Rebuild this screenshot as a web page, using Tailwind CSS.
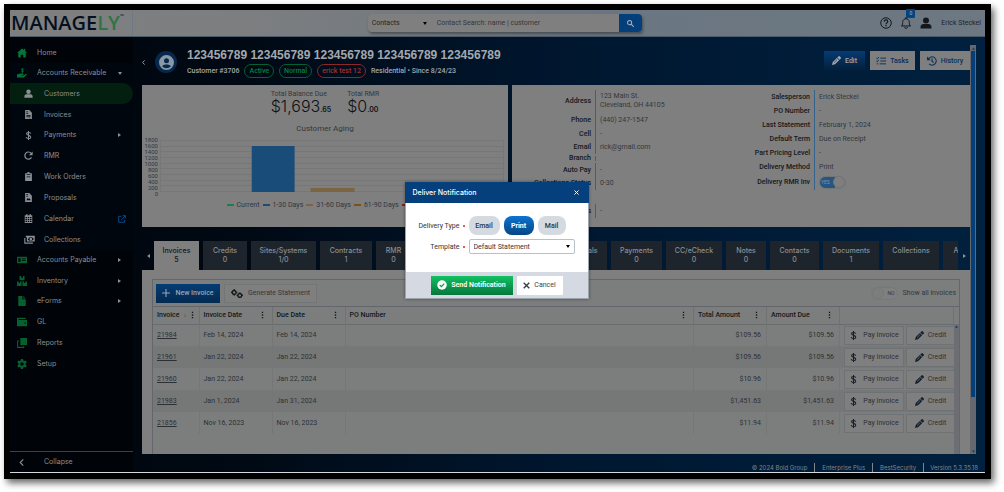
<!DOCTYPE html>
<html lang="en">
<head>
<meta charset="utf-8">
<title>Managely - Customer</title>
<script src="https://cdn.jsdelivr.net/npm/@tailwindcss/browser@4"></script>
</head>
<body class="bg-white font-['Roboto','Liberation_Sans',sans-serif] text-[7px] leading-[10px] text-[#22262c]">
<svg class="hidden" xmlns="http://www.w3.org/2000/svg">
  <symbol id="home" viewBox="0 0 24 24"><path fill="currentColor" d="M12 1 0 12h3v11h6v-7h6v7h6V12h3l-4-4V2h-3v3z"/></symbol>
  <symbol id="hand" viewBox="0 0 24 24"><path fill="none" stroke="currentColor" stroke-width="2" d="M15.500 2.800c-1-1.200-5-1.200-5 .8 0 2.200 5 1.400 5 3.900 0 2.200-4.200 2.100-5.300.5M13 0v12"/><path fill="currentColor" d="M0 15h4l3-2h7q2 0 2 2t-2 2h-4v1h6l5-4q3 0 2 2l-6 6q-1 1-3 1H0z"/></symbol>
  <symbol id="user" viewBox="0 0 24 24"><path fill="currentColor" d="M12 1a5.500 5.500 0 0 0 0 12 5.500 5.500 0 0 0 0-12M1 23v-3c0-4 3-6 6-6h10c3 0 6 2 6 6v3z"/></symbol>
  <symbol id="invoice" viewBox="0 0 24 24"><path fill="currentColor" fill-rule="evenodd" d="M3 0h11l7 7v17H3zM6 4v2h5V4zm0 4v2h5V8zm1 5v6h10v-6zm2 2h6v2H9zm4 6v1h5v-1z"/></symbol>
  <symbol id="dollar" viewBox="0 0 24 24"><path fill="none" stroke="currentColor" stroke-width="2.800" d="M18 7c-1-4-11-4.500-11 0 0 5 11 4 11 9.500 0 5-11 5-12.500 0M12 0v24"/></symbol>
  <symbol id="rotate" viewBox="0 0 24 24"><path fill="none" stroke="currentColor" stroke-width="3.200" d="M20 17A9.500 9.500 0 1 1 19 6"/><path fill="currentColor" d="M23 1v10H13z"/></symbol>
  <symbol id="clip" viewBox="0 0 24 24"><path fill="currentColor" fill-rule="evenodd" d="M3 3h5q1-3 4-3t4 3h5v21H3zm4 3v2h10V6zm0 6v2h10v-2z"/></symbol>
  <symbol id="proposal" viewBox="0 0 24 24"><path fill="currentColor" fill-rule="evenodd" d="M3 0h11l7 7v17H3zM6 3v2h5V3zm0 4v2h5V7zm0 12 4-6 3 3 2-2 3 5z"/></symbol>
  <symbol id="cal" viewBox="0 0 24 24"><path fill="currentColor" fill-rule="evenodd" d="M2 3h4V0h3v3h6V0h3v3h4v21H2zm2 5v3h4V8zm6 0v3h4V8zm6 0v3h4V8zM4 13v3h4v-3zm6 0v3h4v-3zm6 0v3h4v-3zM4 18v3h4v-3zm6 0v3h4v-3zm6 0v3h4v-3z"/></symbol>
  <symbol id="cash" viewBox="0 0 28 24"><path fill="currentColor" fill-rule="evenodd" d="M4 2h24v15H7V6H4zm10 4q-1 3-4 4v3q3 0 4 2h7q1-2 4-3V9q-3 0-4-3zm3.500 1.500a3.500 3.500 0 1 1 0 7 3.500 3.500 0 0 1 0-7M0 8h3v12h20v3H0z"/></symbol>
  <symbol id="check" viewBox="0 0 28 24"><path fill="currentColor" fill-rule="evenodd" d="M0 3h28v18H0zm4 4v10h6V7zm10 1v2h10V8zm0 5v2h10v-2z"/></symbol>
  <symbol id="boxes" viewBox="0 0 24 24"><path fill="currentColor" fill-rule="evenodd" d="M6 0h4v4h4V0h4v10H6zM0 13h4v4h3v-4h4v11H0zm13 0h4v4h3v-4h4v11H13z"/></symbol>
  <symbol id="file" viewBox="0 0 24 24"><path fill="currentColor" d="M3 0h10v8h8v16H3zM15 0l6 6h-6z"/></symbol>
  <symbol id="wallet" viewBox="0 0 24 24"><path fill="currentColor" fill-rule="evenodd" d="M0 2h21v3H4v2h20v15H0zm18 11v3h3v-3z"/></symbol>
  <symbol id="copy" viewBox="0 0 24 24"><path fill="currentColor" d="M8 0h16v17H8z"/><path fill="none" stroke="currentColor" stroke-width="2.500" d="M5 7H1.500v15.500H16V20"/></symbol>
  <symbol id="gear" viewBox="0 0 24 24"><path fill="currentColor" fill-rule="evenodd" d="M9.500 0h5l.7 3.600 2.300 1.300 3.500-1.200 2.500 4.300-2.800 2.500v3l2.800 2.500-2.500 4.300-3.500-1.200-2.300 1.300-.7 3.600h-5l-.7-3.600-2.300-1.300L3 20.300.5 16l2.800-2.500v-3L.5 8 3 3.700l3.500 1.200 2.300-1.300zM12 8a4 4 0 1 0 0 8 4 4 0 0 0 0-8"/></symbol>
  <symbol id="pencil" viewBox="0 0 24 24"><path fill="currentColor" fill-rule="evenodd" d="M17 1q2-2 4 0l2 2q2 2 0 4l-3 3-6-6zM13 5l6 6L8 22l-8 2 2-8zm0 4-8 8 1 1 8-8z"/></symbol>
  <symbol id="tasks" viewBox="0 0 28 24"><path fill="none" stroke="currentColor" stroke-width="2.600" d="m1 4 2.500 2.500L8 1M1 12l2.500 2.500L8 9M12 4h16M12 12h16M10 20h18M2 20h4"/></symbol>
  <symbol id="history" viewBox="0 0 24 24"><path fill="none" stroke="currentColor" stroke-width="2.600" d="M3.500 7A10 10 0 1 1 5 19M12 6v6.500l4 3"/><path fill="currentColor" d="M0 1v9h9z"/></symbol>
  <symbol id="dots" viewBox="0 0 4 12"><path fill="currentColor" d="M1 1h2v2H1zM1 5h2v2H1zM1 9h2v2H1z"/></symbol>
  <symbol id="right" viewBox="0 0 6 8"><path fill="currentColor" d="M0 0v8l6-4z"/></symbol>
  <symbol id="down" viewBox="0 0 8 6"><path fill="currentColor" d="M0 0h8L4 6z"/></symbol>
  <symbol id="cross" viewBox="0 0 10 10"><path fill="none" stroke="currentColor" stroke-width="2" d="m1 1 8 8M9 1 1 9"/></symbol>
</svg>

<div class="flex h-screen pt-1 pr-[13px] pb-[13px] pl-1">
<div class="relative flex min-w-0 flex-1 flex-col border-6 border-black bg-[linear-gradient(90deg,#00040a_0%,#000a15_25%,#001730_58%,#00213f_100%)] shadow-[3px_4px_7px_rgba(0,0,0,0.6)]">

  <header class="flex h-[27px] shrink-0 items-center border-b border-[#4d5a68] bg-[linear-gradient(90deg,#7f7f7f_0%,#7c7e80_25%,#6a7681_60%,#6d7882_100%)]">
    <div class="flex h-full w-[123px] shrink-0 items-start border-r border-[#6f7986] pl-px font-['Open_Sans',sans-serif] text-[20px] leading-[26px] font-semibold text-[#04101f]">MANAGE<span class="text-[#2f7444]">LY</span><sup class="top-0 text-[5px] leading-3 font-normal">™</sup></div>
    <div class="flex flex-1 justify-center">
      <form class="-ml-1 flex h-[18px] w-[274px] rounded-sm bg-[#7f7f7f] shadow-[1px_2px_3px_rgba(0,0,0,0.35)]">
        <div class="relative flex w-16 items-center">
          <select aria-label="Search in" class="h-full w-full appearance-none pl-1 outline-none"><option>Contacts</option></select>
          <svg class="pointer-events-none absolute right-[5px] h-[3px] w-1 text-black"><use href="#down"/></svg>
        </div>
        <input aria-label="Contact Search" placeholder="Contact Search: name | customer" class="min-w-0 flex-1 pl-[5px] outline-none placeholder:text-[#33373d]">
        <button type="button" aria-label="Search" class="flex w-[23px] items-center justify-center rounded-r-sm bg-[#053f7a] text-[#9fb0c2]"><svg class="size-[7px]" viewBox="0 0 12 12"><path fill="none" stroke="currentColor" stroke-width="1.800" d="M4.500 1a3.500 3.500 0 1 1 0 7 3.500 3.500 0 0 1 0-7M7 7l4.500 4.500"/></svg></button>
      </form>
    </div>
    <div class="flex h-full items-center pr-1 text-[#14171b]">
      <button aria-label="Help" class="mr-2"><svg class="size-3" viewBox="0 0 24 24"><circle cx="12" cy="12" r="10.500" fill="none" stroke="currentColor" stroke-width="2"/><path fill="none" stroke="currentColor" stroke-width="2.400" d="M8.500 9.500c0-5 7-4.500 7-.5 0 3-3.500 2.500-3.500 5.500m0 1.500v2.500"/></svg></button>
      <button aria-label="Notifications" class="relative mr-2"><svg class="size-3" viewBox="0 0 24 24"><path fill="none" stroke="currentColor" stroke-width="2" d="M3 18c3-3 2-6 2.500-9C6 5.500 9 3.500 12 3.500s6 2 6.500 5.500c.5 3-.5 6 2.500 9zM12 0v3.500M9 20.500c1 3 5 3 6 0"/></svg><span class="absolute -top-2 left-[6px] h-[9px] w-[9px] rounded-[1px] bg-[#05457f] text-center text-[5px] leading-[9px] text-[#9fb4c8]">0</span></button>
      <svg class="mr-[9px] size-3"><use href="#user"/></svg>
      <span class="text-[#20242a]">Erick Steckel</span>
    </div>
  </header>

  <div class="flex min-h-0 flex-1">
    <nav class="flex w-[123px] shrink-0 flex-col bg-[#000307] pt-[5px] font-['Inter',sans-serif] text-[#8b8f94]">
      <a href="#" class="flex h-[21px] items-center gap-[10px] pl-[7px]"><svg class="size-[10px] text-[#06733a]"><use href="#home"/></svg>Home</a>
      <a href="#" class="flex h-5 items-center gap-[10px] bg-[#00060d] pr-[11px] pl-[7px]"><svg class="size-[10px] text-[#06733a]"><use href="#hand"/></svg><span class="flex-1">Accounts Receivable</span><svg class="h-[3px] w-1"><use href="#down"/></svg></a>
      <div class="bg-[#00060d]">
        <a href="#" class="flex h-[21px] items-center gap-[11px] rounded-r-full bg-[#021f10] pl-[14px]"><svg class="size-[9px]"><use href="#user"/></svg>Customers</a>
        <a href="#" class="flex h-[21px] items-center gap-[11px] pl-[14px]"><svg class="size-[9px]"><use href="#invoice"/></svg>Invoices</a>
        <a href="#" class="flex h-5 items-center gap-[11px] pr-3 pl-[14px]"><svg class="size-[9px]"><use href="#dollar"/></svg><span class="flex-1">Payments</span><svg class="h-1 w-[3px]"><use href="#right"/></svg></a>
        <a href="#" class="flex h-[21px] items-center gap-[11px] pl-[14px]"><svg class="size-[9px]"><use href="#rotate"/></svg>RMR</a>
        <a href="#" class="flex h-[21px] items-center gap-[11px] pl-[14px]"><svg class="size-[9px]"><use href="#clip"/></svg>Work Orders</a>
        <a href="#" class="flex h-[21px] items-center gap-[11px] pl-[14px]"><svg class="size-[9px]"><use href="#proposal"/></svg>Proposals</a>
        <a href="#" class="flex h-[21px] items-center gap-[11px] pr-[7px] pl-[14px]"><svg class="size-[9px]"><use href="#cal"/></svg><span class="flex-1">Calendar</span><svg class="size-2 text-[#06508f]" viewBox="0 0 12 12"><path fill="none" stroke="currentColor" stroke-width="1.400" d="M5 2H1v9h9V7M7 1h4v4M11 1 5 7"/></svg></a>
        <a href="#" class="flex h-[21px] items-center gap-[9px] pl-[14px]"><svg class="h-[9px] w-[11px]"><use href="#cash"/></svg>Collections</a>
      </div>
      <a href="#" class="flex h-5 items-center gap-[10px] pr-3 pl-[7px]"><svg class="size-[10px] text-[#06602f]"><use href="#check"/></svg><span class="flex-1">Accounts Payable</span><svg class="h-1 w-[3px]"><use href="#right"/></svg></a>
      <a href="#" class="flex h-[21px] items-center gap-[10px] pr-3 pl-[7px]"><svg class="size-[10px] text-[#06602f]"><use href="#boxes"/></svg><span class="flex-1">Inventory</span><svg class="h-1 w-[3px]"><use href="#right"/></svg></a>
      <a href="#" class="flex h-5 items-center gap-[10px] pr-3 pl-[7px]"><svg class="size-[10px] text-[#06602f]"><use href="#file"/></svg><span class="flex-1">eForms</span><svg class="h-1 w-[3px]"><use href="#right"/></svg></a>
      <a href="#" class="flex h-[21px] items-center gap-[10px] pl-[7px]"><svg class="size-[10px] text-[#06602f]"><use href="#wallet"/></svg>GL</a>
      <a href="#" class="flex h-[21px] items-center gap-[10px] pl-[7px]"><svg class="size-[10px] text-[#06602f]"><use href="#copy"/></svg>Reports</a>
      <a href="#" class="flex h-[21px] items-center gap-[10px] pl-[7px]"><svg class="size-[10px] text-[#06602f]"><use href="#gear"/></svg>Setup</a>
      <button class="mt-auto flex h-[21px] items-center gap-5 border-t border-[#3c3f43] pl-[9px]"><svg class="h-[7px] w-[5px]" viewBox="0 0 5 8"><path fill="none" stroke="currentColor" stroke-width="1.300" d="M4.500.5 1 4l3.500 3.500"/></svg>Collapse</button>
    </nav>

    <main class="flex min-w-0 flex-1 flex-col pr-[9px]">
      <div class="flex min-h-0 flex-1 pt-2">
        <div class="flex min-w-0 flex-1 flex-col pl-[9px]">
          <div class="flex h-10 shrink-0 gap-[10px] text-[#a3a8ae]">
            <div class="flex h-[34px] items-center gap-[10px]">
              <svg class="h-[5px] w-[3px]" viewBox="0 0 5 8"><path fill="none" stroke="currentColor" stroke-width="1.600" d="M4.500.5 1 4l3.500 3.500"/></svg>
              <span class="flex size-[22px] items-center justify-center rounded-full bg-[#05284c]"><svg class="size-[15px]" viewBox="0 0 24 24"><path fill="#8a98a6" fill-rule="evenodd" d="M12 0a12 12 0 1 0 0 24 12 12 0 0 0 0-24m0 5a4 4 0 1 1 0 8 4 4 0 0 1 0-8M5 18c1.500-4 12.500-4 14 0a9 9 0 0 1-14 0"/></svg></span>
            </div>
            <div class="min-w-0 flex-1">
              <h1 class="mt-[3px] font-['Liberation_Sans',sans-serif] text-[12px] leading-[14px] font-bold whitespace-nowrap">123456789 123456789 123456789 123456789 123456789</h1>
              <div class="mt-[2px] flex items-center gap-[5px] font-medium whitespace-nowrap">
                <span>Customer #3706</span>
                <span class="flex h-[14px] items-center rounded-full border border-[#06602f] px-1 text-[#06803e]">Active</span>
                <span class="flex h-[14px] items-center rounded-full border border-[#06602f] px-1 text-[#06803e]">Normal</span>
                <span class="flex h-[14px] items-center rounded-full border border-[#8a2727] px-1 text-[#a03030]">erick test 12</span>
                <span>Residential • Since 8/24/23</span>
              </div>
            </div>
            <div class="mt-[6px] flex h-[19px] gap-[5px] font-medium">
              <button class="flex w-[41px] items-center justify-center gap-1 bg-linear-to-b from-[#053c74] to-[#04203c]"><svg class="size-[9px]"><use href="#pencil"/></svg>Edit</button>
              <button class="flex w-[45px] items-center justify-center gap-1 bg-[#7f7f7f] text-[#05305c]"><svg class="size-[10px]"><use href="#tasks"/></svg>Tasks</button>
              <button class="flex w-[50px] items-center justify-center gap-1 bg-[#7f7f7f] text-[#05305c]"><svg class="size-[10px]"><use href="#history"/></svg>History</button>
            </div>
          </div>

          <div class="flex h-[142px] shrink-0 gap-1">
            <section class="w-[366px] shrink-0 bg-[#7f7f7f] pt-[5px]">
              <div class="flex justify-center gap-4">
                <div class="leading-[8px] text-[#33373d]">Total Balance Due<div class="font-['Inter',sans-serif] text-[16px] leading-4 font-light text-[#0e1115]">$1,693<span class="text-[7px] font-semibold">.65</span></div></div>
                <div class="leading-[8px] text-[#33373d]">Total RMR<div class="font-['Inter',sans-serif] text-[16px] leading-4 font-light text-[#0e1115]">$0<span class="text-[7px] font-semibold">.00</span></div></div>
              </div>
              <h2 class="mt-[6px] text-center text-[8px] text-[#33373d]">Customer Aging</h2>
              <div class="mt-[3px] flex h-[62px] pr-[3px]">
                <div class="flex h-[57px] w-4 flex-col items-end justify-between text-[6px] leading-[6px] text-[#33373d]"><span>1800</span><span>1600</span><span>1400</span><span>1200</span><span>1000</span><span>800</span><span>600</span><span>400</span><span>200</span><span>0</span></div>
                <svg class="h-[62px] min-w-0 flex-1" viewBox="0 0 348 62" preserveAspectRatio="none">
                  <path stroke="#777" fill="none" d="M2 3.500h345M2 9.500h345M2 14.500h345M2 20.500h345M2 26.500h345M2 31.500h345M2 37.500h345M2 43.500h345M2 48.500h345M2 54.500h345M2.500 3v52M346.500 3v52"/>
                  <path fill="#1a4c7a" d="M94 9h43v46H94z"/><path fill="#7b6442" d="M153 51h44v4h-44z"/>
                </svg>
              </div>
              <div class="mt-px flex justify-center gap-[3px] whitespace-nowrap text-[#33373d]">
                <span class="flex items-center gap-[3px]"><i class="h-[2px] w-[7px] bg-[#1b7f4c]"></i>Current</span>
                <span class="flex items-center gap-[3px]"><i class="h-[2px] w-[7px] bg-[#1a4c7a]"></i>1-30 Days</span>
                <span class="flex items-center gap-[3px]"><i class="h-[2px] w-[7px] bg-[#7b6442]"></i>31-60 Days</span>
                <span class="flex items-center gap-[3px]"><i class="h-[2px] w-[7px] bg-[#805010]"></i>61-90 Days</span>
                <span class="flex items-center gap-[3px]"><i class="h-[2px] w-[7px] bg-[#802020]"></i>91+</span>
              </div>
            </section>

            <section class="flex min-w-0 flex-1 bg-[#7f7f7f] pt-[5px] text-[#33373d]">
              <dl class="grid w-[200px] auto-rows-min grid-cols-[83px_1fr] [&>dd]:border-l [&>dd]:border-[#35638c] [&>dd]:pl-1 [&>dt]:pr-1 [&>dt]:text-right [&>dt]:font-medium [&>dt]:text-[#14171b]">
                <dt class="leading-[23px]">Address</dt><dd class="h-[23px] pt-[2px] leading-[9px]">123 Main St.<br>Cleveland, OH 44105</dd>
                <dt class="leading-[14px]">Phone</dt><dd class="h-[14px] leading-[14px]">(440) 247-1547</dd>
                <dt class="leading-[14px]">Cell</dt><dd class="leading-[14px]">-</dd>
                <dt class="leading-[13px]">Email</dt><dd class="leading-[13px]">rick@gmail.com</dd>
                <dt class="leading-[9px]">Branch</dt><dd class="mt-[2px] mb-[2px]"></dd>
                <dt class="leading-[14px]">Auto Pay</dt><dd class="leading-[14px]">-</dd>
                <dt class="leading-[13px]">Collections Status</dt><dd class="leading-[13px]">0-30</dd>
                <dt class="mt-[14px] leading-[14px]">Comments</dt><dd class="mt-[14px] leading-[14px]">-</dd>
              </dl>
              <dl class="ml-[19px] grid flex-1 auto-rows-min grid-cols-[83px_1fr] leading-[14px] [&>dd]:border-l [&>dd]:border-[#35638c] [&>dd]:pl-1 [&>dt]:pr-1 [&>dt]:text-right [&>dt]:font-medium [&>dt]:text-[#14171b]">
                <dt>Salesperson</dt><dd>Erick Steckel</dd>
                <dt>PO Number</dt><dd>-</dd>
                <dt>Last Statement</dt><dd>February 1, 2024</dd>
                <dt>Default Term</dt><dd>Due on Receipt</dd>
                <dt>Part Pricing Level</dt><dd>-</dd>
                <dt>Delivery Method</dt><dd>Print</dd>
                <dt class="leading-4"><label for="rmr">Delivery RMR Inv</label></dt>
                <dd class="flex h-4 items-center"><span class="relative flex h-[13px] w-[27px] items-center justify-end rounded-full border border-[#737578] bg-linear-to-r from-[#265680] from-60% to-[#7f7f7f] to-60%"><input id="rmr" type="checkbox" checked class="absolute inset-0 opacity-0"><span class="w-3 text-[5px] text-[#7f93a6]">YES</span><span class="size-3 rounded-full border border-[#737578] bg-[#7f7f7f]"></span></span></dd>
              </dl>
            </section>
          </div>

          <div class="mt-[14px] flex h-[29px] shrink-0 items-center justify-between font-['Inter',sans-serif] text-[#8a8f95]">
            <button aria-label="Scroll tabs left" class="flex w-3 justify-center"><svg class="h-1 w-[3px] rotate-180"><use href="#right"/></svg></button>
            <div role="tablist" class="flex h-full min-w-0 flex-1 gap-1 overflow-hidden leading-[9px] font-medium [&>button]:flex [&>button]:shrink-0 [&>button]:flex-col [&>button]:items-center [&>button]:pt-[5px]">
              <button role="tab" aria-selected="true" class="w-[45px] bg-[#7f7f7f] text-[#14171b]">Invoices<span>5</span></button>
              <button role="tab" class="w-11 bg-[#1d242c]">Credits<span>0</span></button>
              <button role="tab" class="w-[65px] bg-[#1d242c]">Sites/Systems<span>1/0</span></button>
              <button role="tab" class="w-[52px] bg-[#1d242c]">Contracts<span>1</span></button>
              <button role="tab" class="w-[35px] bg-[#1d242c]">RMR<span>0</span></button>
              <button role="tab" class="w-[66px] bg-[#1d242c]">Jobs<span>0</span></button>
              <button role="tab" class="w-[66px] bg-[#1d242c]">Work Orders<span>0</span></button>
              <button role="tab" class="w-[52px] bg-[#1d242c]">Proposals<span>0</span></button>
              <button role="tab" class="w-[51px] bg-[#1d242c]">Payments<span>0</span></button>
              <button role="tab" class="w-14 bg-[#1d242c]">CC/eCheck<span>0</span></button>
              <button role="tab" class="w-10 bg-[#1d242c]">Notes<span>0</span></button>
              <button role="tab" class="w-[49px] bg-[#1d242c]">Contacts<span>0</span></button>
              <button role="tab" class="w-14 bg-[#1d242c]">Documents<span>1</span></button>
              <button role="tab" class="w-14 bg-[#1d242c]">Collections</button>
              <button role="tab" class="w-[52px] bg-[#1d242c]">Activities</button>
            </div>
            <button aria-label="Scroll tabs right" class="flex w-3 justify-center"><svg class="h-1 w-[3px]"><use href="#right"/></svg></button>
          </div>

          <div class="min-h-0 flex-1 bg-[#7f7f7f] pt-[9px] pr-[10px] pl-[10px]">
            <div class="flex h-full flex-col border border-b-0 border-[#63676c] bg-[#7c7e7d]">
              <div class="flex h-[27px] shrink-0 items-center gap-1 border-b border-[#63676c] px-[3px]">
                <button class="flex h-[19px] w-16 items-center justify-center gap-[5px] bg-linear-to-b from-[#053c74] to-[#042a50] font-medium text-[#9aa6b3]"><svg class="size-2" viewBox="0 0 10 10"><path stroke="currentColor" stroke-width="1.300" d="M5 0v10M0 5h10"/></svg>New Invoice</button>
                <button class="flex h-[19px] w-[93px] items-center justify-center gap-[5px] border border-[#747676] bg-[#7f7f7f] text-[#33373d]"><svg class="h-[9px] w-3 text-[#14171b]" viewBox="0 0 32 24"><path fill="none" stroke="currentColor" stroke-width="3.500" d="M8.500 4a5 5 0 1 1 0 10 5 5 0 0 1 0-10M23.500 12a5 5 0 1 1 0 10 5 5 0 0 1 0-10"/><path stroke="currentColor" stroke-width="3" d="M8.500 0v4M8.500 14v4M0 9h3M14 9h3M23.500 9v3M23.500 22v2M15 17h3M29 17h3"/></svg>Generate Statement</button>
                <label class="ml-auto flex items-center gap-1 text-[#33373d]"><span class="relative flex h-[13px] w-[27px] items-center rounded-full border border-[#777979] bg-[#7f7f7f]"><input type="checkbox" class="absolute inset-0 opacity-0"><span class="size-3 rounded-full border border-[#777979] bg-[#7c7e7d]"></span><span class="flex-1 text-center text-[5px]">NO</span></span>Show all invoices</label>
              </div>
              <div class="flex min-h-0 flex-1">
                <table class="w-full table-fixed self-start text-[#2c3036] [&_td]:border-r [&_td]:border-[#757776] [&_td]:pr-[5px] [&_td]:pl-1 [&_th]:border-r [&_th]:border-[#6f7271] [&_th]:pr-[5px] [&_th]:pl-1 [&_th]:font-medium [&_tbody>tr]:h-[22px]">
                  <colgroup><col class="w-[46px]"><col class="w-[73px]"><col class="w-[73px]"><col><col class="w-[73px]"><col class="w-[73px]"><col class="w-[114px]"></colgroup>
                  <thead><tr class="h-[17px] border-b border-[#6a6d70] text-left text-[#14171b]">
                    <th><div class="flex items-center justify-between">Invoice<span class="text-[5px]">↓</span><svg class="h-2 w-[3px]"><use href="#dots"/></svg></div></th>
                    <th><div class="flex items-center justify-between">Invoice Date<svg class="mr-[3px] h-2 w-[3px]"><use href="#dots"/></svg></div></th>
                    <th><div class="flex items-center justify-between">Due Date<svg class="mr-[3px] h-2 w-[3px]"><use href="#dots"/></svg></div></th>
                    <th><div class="flex items-center justify-between">PO Number<svg class="mr-[3px] h-2 w-[3px]"><use href="#dots"/></svg></div></th>
                    <th><div class="flex items-center justify-between">Total Amount<svg class="mr-[3px] h-2 w-[3px]"><use href="#dots"/></svg></div></th>
                    <th><div class="flex items-center justify-between">Amount Due<svg class="mr-[3px] h-2 w-[3px]"><use href="#dots"/></svg></div></th>
                    <th></th>
                  </tr></thead>
                  <tbody id="rows"></tbody>
                </table>
                <div class="flex w-[5px] shrink-0 flex-col"><div class="h-[17px]"></div><div class="flex flex-1 justify-center bg-[#6c6e73] pt-px"><svg class="h-[3px] w-[3px] rotate-180 text-[#053f7a]"><use href="#down"/></svg></div></div>
              </div>
            </div>
          </div>
        </div>
        <div class="flex w-[6px] shrink-0 flex-col items-center bg-[#65686d] text-[#053f7a]">
          <div class="flex h-[6px] items-center"><svg class="h-[3px] w-[3px] rotate-180"><use href="#down"/></svg></div>
          <div class="h-[346px] w-1 bg-[#053f7a]"></div>
          <div class="mt-auto flex h-[6px] items-center"><svg class="h-[3px] w-[3px]"><use href="#down"/></svg></div>
        </div>
      </div>
      <footer class="flex h-[18px] shrink-0 items-end justify-end font-['Inter',sans-serif] text-[6px] text-[#80858b]">
        <span class="border-r border-[#80858b] pr-[7px] leading-[9px]">© 2024 Bold Group</span><span class="border-r border-[#80858b] px-[7px] leading-[9px]">Enterprise Plus</span><span class="border-r border-[#80858b] px-[7px] leading-[9px]">BestSecurity</span><span class="-mr-[2px] pl-[6px] leading-[9px]">Version 5.3.35.18</span>
      </footer>
    </main>
  </div>
  <div class="h-px shrink-0 bg-[#d4d8dc]"></div>

  <div class="pointer-events-none absolute inset-0 flex items-center justify-center pr-[2px] pb-[2px]">
    <div role="dialog" aria-labelledby="dlg" class="pointer-events-auto w-[184px] border border-[#9aa3ae] bg-white shadow-[0_0_3px_rgba(0,0,0,0.4)]">
      <div class="-mx-px -mt-px flex h-[21px] items-center justify-between bg-[#06407c] px-2 text-white"><h2 id="dlg" class="font-['Inter',sans-serif] font-medium">Deliver Notification</h2><button aria-label="Close" class="mr-[2px]"><svg class="size-[5px]"><use href="#cross"/></svg></button></div>
      <div class="grid h-[69px] grid-cols-[54px_1fr] content-start items-center gap-x-[8px] gap-y-[4px] pt-[13px] text-[#2f343b]">
        <span class="text-right whitespace-nowrap">Delivery Type</span>
        <div class="flex items-center gap-1 font-medium"><i class="-ml-[5px] size-[2px] rounded-full bg-[#e02020]"></i><button class="h-[19px] w-[31px] rounded-lg bg-[#d5dae1]">Email</button><button class="h-[19px] w-[30px] rounded-lg bg-linear-to-b from-[#0d74d1] to-[#064684] font-bold text-white">Print</button><button class="h-[19px] w-7 rounded-lg bg-[#d5dae1]">Mail</button></div>
        <label for="tpl" class="text-right">Template</label>
        <div class="flex items-center gap-1"><i class="-ml-[5px] size-[2px] rounded-full bg-[#e02020]"></i><div class="relative flex items-center"><select id="tpl" class="h-[15px] w-[106px] appearance-none rounded-[2px] border border-[#b9c0ca] bg-white pl-1 outline-none"><option>Default Statement</option></select><svg class="pointer-events-none absolute right-[5px] h-[3px] w-1 text-black"><use href="#down"/></svg></div></div>
      </div>
      <div class="flex h-[26px] items-center justify-center gap-1 bg-[#d5dae2]">
        <button class="flex h-[19px] w-[82px] items-center justify-center gap-1 bg-linear-to-b from-[#12c163] to-[#07773b] font-semibold text-white"><svg class="size-[10px]" viewBox="0 0 20 20"><circle cx="10" cy="10" r="9.500" fill="#fff"/><path fill="none" stroke="#0a9a4c" stroke-width="2.400" d="m5.500 10 3.300 3.300 5.700-6"/></svg>Send Notification</button>
        <button class="flex h-[19px] w-[46px] items-center justify-center gap-1 bg-white text-[#3a3f46]"><svg class="size-[7px]"><use href="#cross"/></svg>Cancel</button>
      </div>
    </div>
  </div>
</div>
</div>
<script>
const rows = [
  ['21984', 'Feb 14, 2024', 'Feb 14, 2024', '$109.56'],
  ['21961', 'Jan 22, 2024', 'Jan 22, 2024', '$109.56'],
  ['21960', 'Jan 22, 2024', 'Jan 22, 2024', '$10.96'],
  ['21983', 'Jan 1, 2024', 'Jan 31, 2024', '$1,451.63'],
  ['21856', 'Nov 16, 2023', 'Nov 16, 2023', '$11.94'],
];
document.getElementById('rows').innerHTML = rows.map(r => `
<tr class="even:bg-[#767877]"><td><a href="#" class="underline">${r[0]}</a></td><td>${r[1]}</td><td>${r[2]}</td><td></td><td class="text-right">${r[3]}</td><td class="text-right">${r[3]}</td>
<td><div class="-mr-[6px] flex gap-[2px]"><button class="flex h-[19px] w-[60px] items-center justify-center gap-[5px] border border-[#6f7275] bg-[#7f7f7f]"><svg class="size-[9px] text-[#14202e]"><use href="#dollar"/></svg>Pay Invoice</button><button class="flex h-[19px] flex-1 items-center justify-center gap-1 border border-r-0 border-[#6f7275] bg-[#7f7f7f]"><svg class="size-[9px] text-[#14202e]"><use href="#pencil"/></svg>Credit</button></div></td></tr>`).join('');
</script>
</body>
</html>
